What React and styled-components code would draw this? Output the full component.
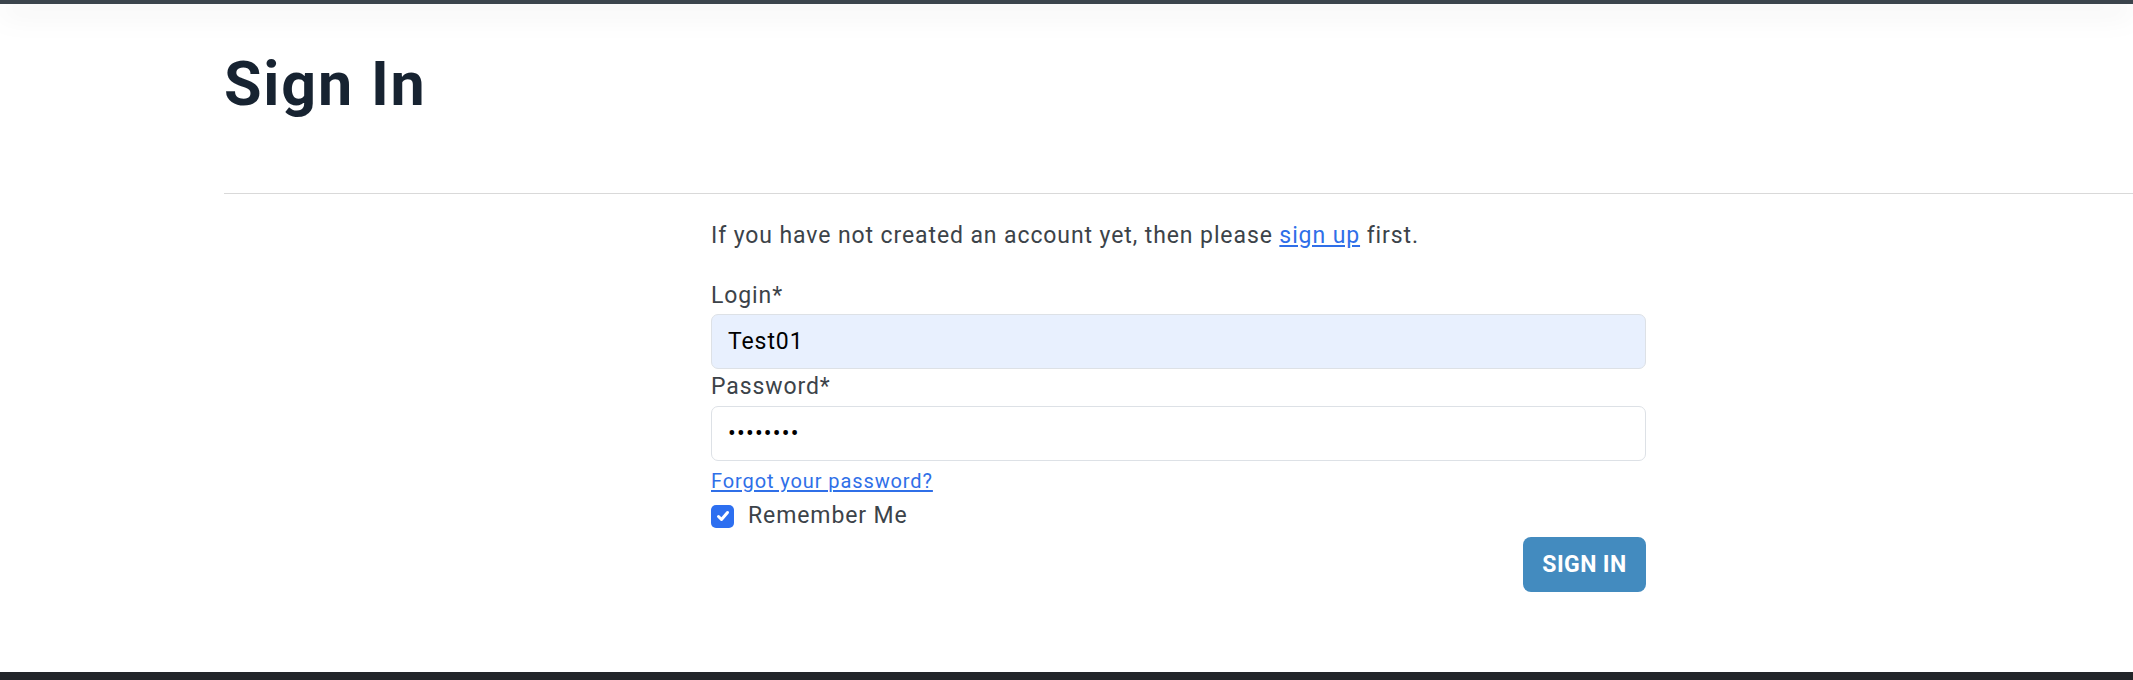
import React from 'react'
import styled, { createGlobalStyle } from "styled-components"

const GlobalStyle = createGlobalStyle`
    html, body {
        margin: 0;
        padding: 0;
        background: #ffffff;
        font-family: Roboto, "Liberation Sans", Arial, sans-serif;
        color: #3c4349;
        overflow: hidden;
    }
    * {
        box-sizing: border-box;
    }
`

const TopBar = styled.div`
    position: relative;
    z-index: 1;
    height: 4px;
    background-color: #3b444c;
    box-shadow: 0 6px 30px rgba(0, 0, 0, 0.22);
`

const Main = styled.main`
    padding-left: 224px;
`

const Title = styled.h1`
    margin: 0;
    padding-top: 44px;
    font-size: 61px;
    line-height: 72px;
    font-weight: 700;
    color: #172331;
    letter-spacing: 1.8px;
`

const Divider = styled.hr`
    margin: 73px 0 0 0;
    border: 0;
    border-top: 1px solid #d9d9d9;
    height: 0;
`

const FormColumn = styled.form`
    display: flex;
    flex-direction: column;
    width: 935px;
    margin-left: 487px;
    padding-top: 26px;
    font-size: 23px;
    letter-spacing: 0.9px;
`

const Intro = styled.p`
    margin: 0 0 29px 0;
    line-height: 32px;
`

const Link = styled.a`
    color: #2f6fe8;
    text-decoration: underline;
    text-underline-offset: 2px;
`

const Label = styled.label`
    line-height: 30px;
    margin-bottom: ${props => props.$gap || "3px"};
`

const Input = styled.input`
    display: block;
    width: 100%;
    height: 55px;
    padding: 0 16px;
    font-family: Roboto, "Liberation Sans", Arial, sans-serif;
    font-size: 23px;
    color: #000000;
    background-color: ${props => props.$filled ? "#e8f0fe" : "#ffffff"};
    border: 1px solid #dde1e6;
    border-radius: 7px;
    outline: none;
    letter-spacing: ${props => props.type === "password" ? "1.2px" : "0.9px"};
    margin-bottom: 3px;
`

const ForgotRow = styled.div`
    margin-top: 3px;
    font-size: 20px;
    line-height: 28px;
`

const CheckRow = styled.label`
    display: flex;
    align-items: center;
    gap: 14px;
    margin-top: 8px;
    line-height: 26px;
`

const CheckBox = styled.span`
    display: inline-flex;
    align-items: center;
    justify-content: center;
    width: 23px;
    height: 23px;
    border-radius: 5px;
    background-color: #2d6ff0;
`

const ButtonRow = styled.div`
    display: flex;
    justify-content: flex-end;
    margin-top: 8px;
`

const SubmitButton = styled.button`
    height: 55px;
    width: 123px;
    border: 0;
    border-radius: 8px;
    background-color: #438bbf;
    color: #ffffff;
    font-family: Roboto, "Liberation Sans", Arial, sans-serif;
    font-size: 23px;
    font-weight: 700;
    letter-spacing: 0.4px;
    cursor: pointer;
`

const Footer = styled.footer`
    margin-top: 80px;
    height: 8px;
    background-color: #222529;
`

const App = () => {
    return (
        <>
            <GlobalStyle />
            <TopBar />
            <Main>
                <Title>Sign In</Title>
                <Divider />
                <FormColumn onSubmit={e => e.preventDefault()}>
                    <Intro>
                        If you have not created an account yet, then please <Link href="#">sign up</Link> first.
                    </Intro>
                    <Label htmlFor="login">Login*</Label>
                    <Input id="login" type="text" defaultValue="Test01" $filled />
                    <Label htmlFor="password" $gap="4px">Password*</Label>
                    <Input id="password" type="password" defaultValue="secret12" />
                    <ForgotRow>
                        <Link href="#">Forgot your password?</Link>
                    </ForgotRow>
                    <CheckRow>
                        <CheckBox>
                            <svg width="16" height="16" viewBox="0 0 16 16" fill="none">
                                <path d="M3.5 8.5 L6.5 11.5 L12.5 4.5" stroke="#ffffff" strokeWidth="3" strokeLinecap="round" strokeLinejoin="round" />
                            </svg>
                        </CheckBox>
                        Remember Me
                    </CheckRow>
                    <ButtonRow>
                        <SubmitButton type="submit">SIGN IN</SubmitButton>
                    </ButtonRow>
                </FormColumn>
            </Main>
            <Footer />
        </>
    )
}

export default App
